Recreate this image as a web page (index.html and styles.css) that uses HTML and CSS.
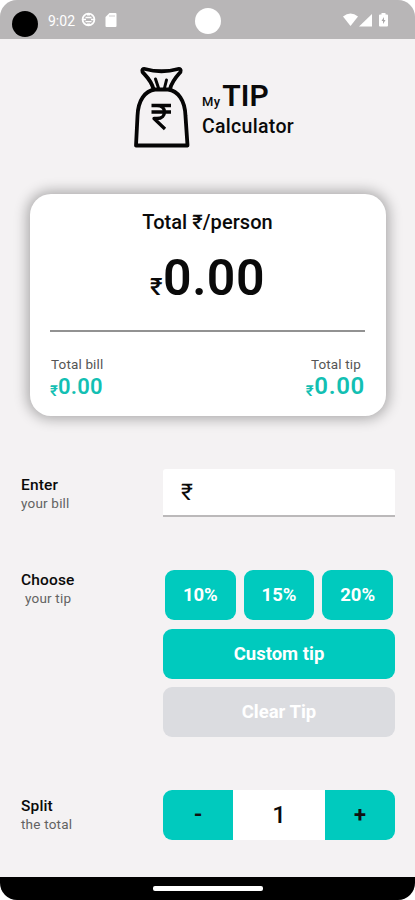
FILE: index.html
```html
<!DOCTYPE html>
<html lang="en">
<head>
<meta charset="utf-8">
<title>My Tip Calculator</title>
<link rel="stylesheet" href="styles.css">
</head>
<body>
<div class="screen">
  <header class="status">
    <span class="lens"></span>
    <span class="clock">9:02</span>
    <svg class="globe" width="15" height="15" viewBox="0 0 15 15"><circle cx="7.500" cy="7.500" r="5.900" fill="none" stroke="#fff" stroke-width="1.800"/><path d="M1.500 7.500h3.500M10 7.500h3.500M4.500 5.500h6M4.500 9.700h6" stroke="#fff" stroke-width="1.300"/><path d="M7.500 1v2.500M7.500 11.500v2.500" stroke="#fff" stroke-width="3"/></svg>
    <svg class="sd" width="12" height="14" viewBox="0 0 12 14"><path d="M4.500 0H10.500Q11.500 0 11.500 1V13Q11.500 14 10.500 14H1.500Q.5 14 .5 13V4Z" fill="#fff"/><path d="M5 2v2M7 2v2M9 2v2" stroke="#b8b6b7" stroke-width=".7"/></svg>
    <span class="camera"></span>
    <svg class="signals" width="46" height="14" viewBox="0 0 46 14"><path d="M0 3.500Q7.500-2.500 15 3.500L7.500 13Z" fill="#fff"/><path d="M16 13.500L29 1V13.500Z" fill="#fff"/><path d="M38.500 0h4v1.500H44q1 0 1 1V12.500q0 1-1 1H37q-1 0-1-1V2.500q0-1 1-1h1.500Z" fill="#fff"/><path d="M41 4L38.500 8H40v3L42.500 7H41Z" fill="#aaa8a9"/></svg>
  </header>
  <main>
    <div class="brand">
      <svg class="bag" width="58" height="82" viewBox="0 0 58 82" fill="none" stroke="#050505" stroke-width="3.800" stroke-linejoin="round" stroke-linecap="round"><path d="M3 79.500L4.500 50C5 34 12 25 22 23.500H35C45 25 52 34 52.500 50L54.500 79.500Z"/><path d="M20.500 23C18 14 13 10 9.500 6C8.500 4 10 2.500 12 3C23 6 34 6 45 3C47 2.500 48.500 4 47.500 6C43 11 39 15 37 23"/><path d="M22.500 13L25.500 22M33.500 14L31.500 22" stroke-width="3"/><path d="M18.500 39.500H38M18.500 46H38M20 39.500H24C34 39.500 34 52.500 24 52.500H21L32 63" stroke-linecap="butt" stroke-width="3.300"/></svg>
      <h1><span class="name"><small>My</small>TIP</span><span class="calc">Calculator</span></h1>
    </div>
    <section class="card">
      <h2>Total ₹/person</h2>
      <div class="amount"><span class="rupee">₹</span>0.00</div>
      <div class="totals">
        <div class="total"><span class="caption">Total bill</span><strong><span class="rupee">₹</span>0.00</strong></div>
        <div class="total tip"><span class="caption">Total tip</span><strong><span class="rupee">₹</span>0.00</strong></div>
      </div>
    </section>
    <section class="row enter">
      <div class="label"><b>Enter</b><span>your bill</span></div>
      <div class="field">₹</div>
    </section>
    <section class="row choose">
      <div class="label"><b>Choose</b><span class="inset">your tip</span></div>
      <div class="choices">
        <div class="percents"><button>10%</button><button>15%</button><button>20%</button></div>
        <button>Custom tip</button>
        <button class="clear">Clear Tip</button>
      </div>
    </section>
    <section class="row split">
      <div class="label"><b>Split</b><span>the total</span></div>
      <div class="stepper"><button>-</button><output>1</output><button>+</button></div>
    </section>
  </main>
  <footer><span class="handle"></span></footer>
</div>
</body>
</html>
```
FILE: styles.css
```css
* { box-sizing: border-box; }
body { margin: 0; background: #fff; font-family: Roboto, "Noto Sans", sans-serif; color: #0a0a0a; }
.screen { width: 415px; height: 900px; display: flex; flex-direction: column; background: #f4f2f3; border-radius: 17px; overflow: hidden; }
.status { height: 39px; background: #b8b6b7; display: flex; align-items: flex-start; color: #fff; flex: none; }
.lens { width: 26px; height: 26px; border-radius: 50%; background: #000; margin: 11px 0 0 12px; }
.clock { font-size: 14px; line-height: 20px; margin: 11px 0 0 10px; width: 28px; white-space: nowrap; }
.globe { margin: 12px 0 0 5px; }
.sd { margin: 13px 0 0 9px; }
.camera { width: 26px; height: 26px; border-radius: 50%; background: #fff; margin: 8px 0 0 78px; }
.signals { margin: 13px 0 0 122px; }
main { flex: 1; display: flex; flex-direction: column; }
.brand { display: flex; margin: 27px 0 0 133px; height: 82px; }
.bag { flex: none; }
h1 { margin: 13px 0 0 11px; font-weight: 500; display: flex; flex-direction: column; }
.name { font-size: 30px; line-height: 34px; font-weight: 600; }
.name small { font-size: 13px; font-weight: 500; margin-right: 2px; letter-spacing: .3px; }
.calc { font-size: 19.500px; line-height: 24px; letter-spacing: .3px; margin-top: -4px; }
.card { margin: 46px 29px 0 30px; height: 222px; border-radius: 21px; background: #fff; box-shadow: 0 0 13px 3px rgba(0,0,0,.3); padding: 16px 21px 0 20px; display: flex; flex-direction: column; text-align: center; }
h2 { margin: 0; font-size: 20px; line-height: 24px; font-weight: 500; letter-spacing: .05px; }
.amount { font-size: 50px; line-height: 58px; font-weight: 600; height: 83px; margin-top: 15px; border-bottom: 2px solid #929292; letter-spacing: .5px; }
.rupee { display: inline-block; line-height: 1; }
.amount .rupee { font-size: 24px; font-weight: 500; }
.totals { display: flex; justify-content: space-between; margin-top: 22px; }
.total { display: flex; flex-direction: column; text-align: left; }
.tip { text-align: right; }
.caption { font-size: 13.500px; line-height: 20px; color: #555; letter-spacing: .15px; padding-left: 1px; }
.tip .caption { padding-right: 4px; }
.total strong { color: #13bfb3; font-size: 22px; font-weight: 600; line-height: 25px; letter-spacing: .2px; }
.total.tip strong { font-size: 24px; letter-spacing: .7px; }
.total .rupee { font-size: 15px; transform: translateY(2px); }
.row { display: flex; padding: 0 20px 0 21px; }
.label { width: 142px; flex: none; display: flex; flex-direction: column; }
.label b { font-size: 15.500px; line-height: 21px; font-weight: 500; letter-spacing: .15px; }
.label span { font-size: 13.500px; line-height: 15px; color: #626262; letter-spacing: .2px; }
.label .inset { padding-left: 4px; }
.enter { margin-top: 53px; }
.enter .label { padding-top: 6px; }
.field { flex: 1; height: 48px; background: #fff; border-bottom: 2px solid #bbb9ba; border-radius: 3px 3px 0 0; padding-left: 18px; font-size: 23px; line-height: 48px; }
.choose { margin-top: 53px; }
.choices { flex: 1; display: flex; flex-direction: column; gap: 8.500px; }
.percents { display: grid; grid-template-columns: repeat(3, 1fr); gap: 8px; padding: 0 2px; }
button { border: 0; padding: 0; height: 50px; border-radius: 9px; background: #00cabe; color: #fff; font: 700 18.500px/50px Roboto, sans-serif; }
.clear { background: #dbdce0; }
.split { margin-top: 53px; }
.split .label { padding-top: 6px; }
.stepper { flex: 1; display: grid; grid-template-columns: 70px 1fr 70px; height: 50px; border-radius: 9px; overflow: hidden; background: #fff; }
.stepper button { border-radius: 0; color: #111; font-size: 22px; }
.stepper output { text-align: center; font-size: 24px; line-height: 50px; font-weight: 500; }
footer { height: 23px; flex: none; background: #000; display: flex; justify-content: center; align-items: flex-start; }
.handle { width: 110px; height: 5px; border-radius: 2px; background: #fff; margin-top: 9px; }
```
